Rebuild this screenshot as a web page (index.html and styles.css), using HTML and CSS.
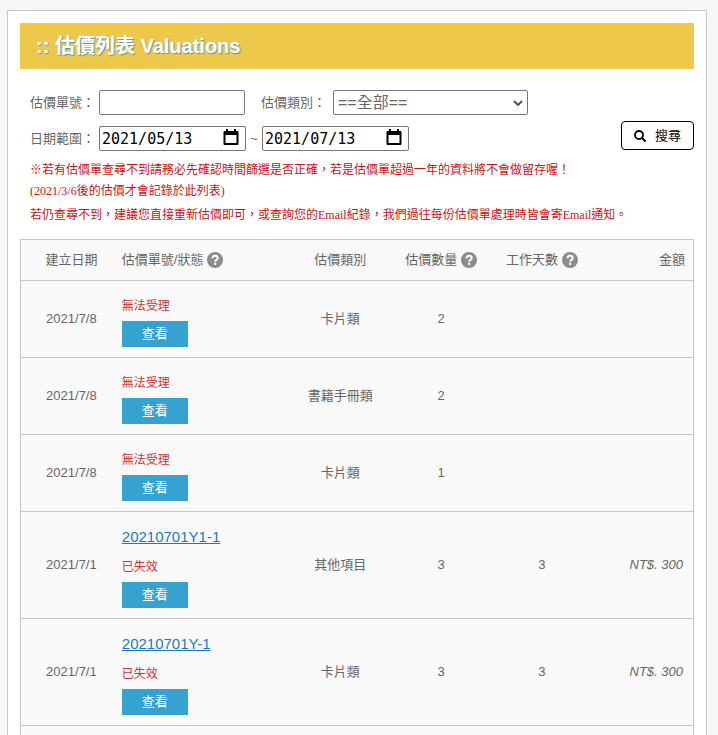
FILE: index.html
```html
<!DOCTYPE html>
<html lang="zh-Hant">
<head>
<meta charset="utf-8">
<meta name="viewport" content="width=device-width, initial-scale=1">
<title>估價列表 Valuations</title>
<link rel="stylesheet" href="styles.css">
</head>
<body>
<svg class="sprite" aria-hidden="true">
  <symbol id="help" viewBox="0 0 16 16">
    <circle cx="8" cy="8" r="8" fill="#8c8c8c"/>
    <path d="M5.500 6.200C5.600 4.500 6.600 3.700 8.100 3.700c1.500 0 2.600.9 2.600 2.200 0 1.900-2.500 1.900-2.500 3.900" fill="none" stroke="#fff" stroke-width="2"/>
    <rect x="7.100" y="10.800" width="2.100" height="2.100" fill="#fff"/>
  </symbol>
  <symbol id="calendar" viewBox="0 0 16 18">
    <path d="M3 1h2v2h6V1h2v2h1.500q1 0 1 1v12q0 1-1 1h-13q-1 0-1-1V4q0-1 1-1H3zM2.500 7v8h11V7z" fill="#000" fill-rule="evenodd"/>
  </symbol>
</svg>
<main class="panel">
  <h1 class="banner">:: 估價列表 Valuations</h1>
  <form class="search">
    <div class="fields">
      <div class="row">
        <label class="name" for="number">估價單號：</label>
        <input class="box number" id="number" type="text">
        <label class="name second" for="kind">估價類別：</label>
        <span class="picker">
          <select class="box kind" id="kind"><option>==全部==</option></select>
          <svg class="arrow" viewBox="0 0 10 6" aria-hidden="true"><path d="M1 1l4 4 4-4" fill="none" stroke="#555" stroke-width="2"/></svg>
        </span>
      </div>
      <div class="row">
        <label class="name" for="from">日期範圍：</label>
        <span class="box date">
          <input class="day" id="from" type="text" value="2021/05/13">
          <button class="open" type="button" aria-label="開始日期"><svg width="16" height="18"><use href="#calendar"/></svg></button>
        </span>
        <label class="tilde" for="to">~</label>
        <span class="box date">
          <input class="day" id="to" type="text" value="2021/07/13">
          <button class="open" type="button" aria-label="結束日期"><svg width="16" height="18"><use href="#calendar"/></svg></button>
        </span>
      </div>
    </div>
    <button class="submit" type="submit">
      <svg width="12" height="12" viewBox="0 0 12 12" aria-hidden="true"><circle cx="5" cy="5" r="4" fill="none" stroke="#000" stroke-width="1.800"/><path d="M8 8l3.500 3.500" stroke="#000" stroke-width="2"/></svg>
      <span>搜尋</span>
    </button>
  </form>
  <div class="notes">
    <p>※若有估價單查尋不到請務必先確認時間篩選是否正確，若是估價單超過一年的資料將不會做留存喔！<br>(2021/3/6後的估價才會記錄於此列表)</p>
    <p>若仍查尋不到，建議您直接重新估價即可，或查詢您的Email紀錄，我們過往每份估價單處理時皆會寄Email通知。</p>
  </div>
  <div class="list">
    <table>
      <thead>
        <tr>
          <th class="c-date">建立日期</th>
          <th class="c-state">估價單號/狀態 <svg class="help"><use href="#help"/></svg></th>
          <th class="c-mid">估價類別</th>
          <th class="c-mid">估價數量 <svg class="help"><use href="#help"/></svg></th>
          <th class="c-mid">工作天數 <svg class="help"><use href="#help"/></svg></th>
          <th class="c-price">金額</th>
        </tr>
      </thead>
      <tbody>
        <tr>
          <td>2021/7/8</td>
          <td class="c-state"><p class="state">無法受理</p><button class="view" type="button">查看</button></td>
          <td>卡片類</td><td>2</td><td></td><td class="c-price"></td>
        </tr>
        <tr>
          <td>2021/7/8</td>
          <td class="c-state"><p class="state">無法受理</p><button class="view" type="button">查看</button></td>
          <td>書籍手冊類</td><td>2</td><td></td><td class="c-price"></td>
        </tr>
        <tr>
          <td>2021/7/8</td>
          <td class="c-state"><p class="state">無法受理</p><button class="view" type="button">查看</button></td>
          <td>卡片類</td><td>1</td><td></td><td class="c-price"></td>
        </tr>
        <tr>
          <td>2021/7/1</td>
          <td class="c-state"><a class="order" href="#">20210701Y1-1</a><p class="state">已失效</p><button class="view" type="button">查看</button></td>
          <td>其他項目</td><td>3</td><td>3</td><td class="c-price"><em>NT$. 300</em></td>
        </tr>
        <tr>
          <td>2021/7/1</td>
          <td class="c-state"><a class="order" href="#">20210701Y-1</a><p class="state">已失效</p><button class="view" type="button">查看</button></td>
          <td>卡片類</td><td>3</td><td>3</td><td class="c-price"><em>NT$. 300</em></td>
        </tr>
      </tbody>
    </table>
  </div>
</main>
</body>
</html>
```
FILE: styles.css
```css
* { box-sizing: border-box; }

body {
  display: flex;
  flex-direction: column;
  min-height: 100vh;
  margin: 0;
  padding: 10px 11px 0 7px;
  background: #f8f7f5;
  color: #666;
  font: 13px/20px "Liberation Sans", "Noto Sans CJK TC", sans-serif;
}

p { margin: 0; }
button, input, select { font: inherit; margin: 0; }
svg { display: block; }
.sprite { position: absolute; width: 0; height: 0; }

.panel {
  display: flex;
  flex: 1;
  flex-direction: column;
  padding: 12px 12px 0;
  border: 1px solid #c9c6c3;
  border-bottom: 0;
  background: #fff;
}

.banner {
  margin: 0;
  padding: 0 16px;
  background: #eec84a;
  color: #fff;
  font-size: 20px;
  line-height: 46px;
  text-shadow: 1px 1px 1px #4f9bab;
}

.search {
  display: flex;
  align-items: flex-end;
  justify-content: space-between;
  padding: 21px 0 0 10px;
}

.fields { display: grid; gap: 11px; }
.row { display: flex; align-items: center; }
.name { width: 69px; white-space: nowrap; }
.second { width: 72px; margin-left: 16px; }
.tilde { width: 16px; text-align: center; }

.box {
  height: 25px;
  border: 1px solid #767676;
  border-radius: 2px;
  background: #fff;
}

.number { width: 146px; }
.picker { position: relative; }

.kind {
  display: block;
  width: 195px;
  padding: 0 4px;
  appearance: none;
  color: #666;
  font-size: 16px;
}

.arrow {
  position: absolute;
  top: 10px;
  right: 5px;
  width: 10px;
  height: 6px;
  pointer-events: none;
}

.date {
  display: flex;
  align-items: center;
  justify-content: space-between;
  width: 147px;
  padding: 0 6px 0 2px;
}

.day {
  width: 100px;
  padding: 0;
  border: 0;
  background: none;
  color: #000;
  font-family: "DejaVu Sans Mono", monospace;
  font-size: 15px;
}

.open { padding: 0 0 3px; border: 0; background: none; }

.submit {
  display: flex;
  align-items: center;
  gap: 9px;
  height: 29px;
  margin-bottom: 1px;
  padding: 0 12px;
  border: 1px solid #000;
  border-radius: 4px;
  background: #fff;
  color: #000;
}

.notes {
  display: grid;
  gap: 3px;
  padding: 9px 0 13px 10px;
  color: #d01010;
  font: 12px/21px "Liberation Serif", "Noto Sans CJK TC", serif;
}

.list {
  flex: 1;
  border: 1px solid #c5c8c8;
  border-bottom: 0;
  background: #f9f9f9;
}

table { width: 100%; border-collapse: collapse; table-layout: fixed; }

th, td {
  padding: 0;
  border-bottom: 1px solid #c5c8c8;
  font-weight: 400;
  text-align: center;
}

th { height: 40px; white-space: nowrap; }
.c-date, .c-mid, th.c-price { width: 15%; }
.c-state { width: 25%; text-align: left; }
td.c-state { padding: 15px 0 10px; }
.c-price { padding-right: 8px; text-align: right; }
td.c-price { padding-right: 10px; }

.help {
  display: inline-block;
  width: 16px;
  height: 16px;
  vertical-align: middle;
}

.order {
  display: block;
  width: fit-content;
  margin-bottom: 10px;
  color: #1b79c4;
  font-size: 15px;
}

.state { margin-bottom: 5px; color: #d0302f; font-size: 12px; }

.view {
  display: block;
  width: 66px;
  height: 26px;
  padding: 0;
  border: 0;
  background: #36a2cf;
  color: #fff;
}
```
